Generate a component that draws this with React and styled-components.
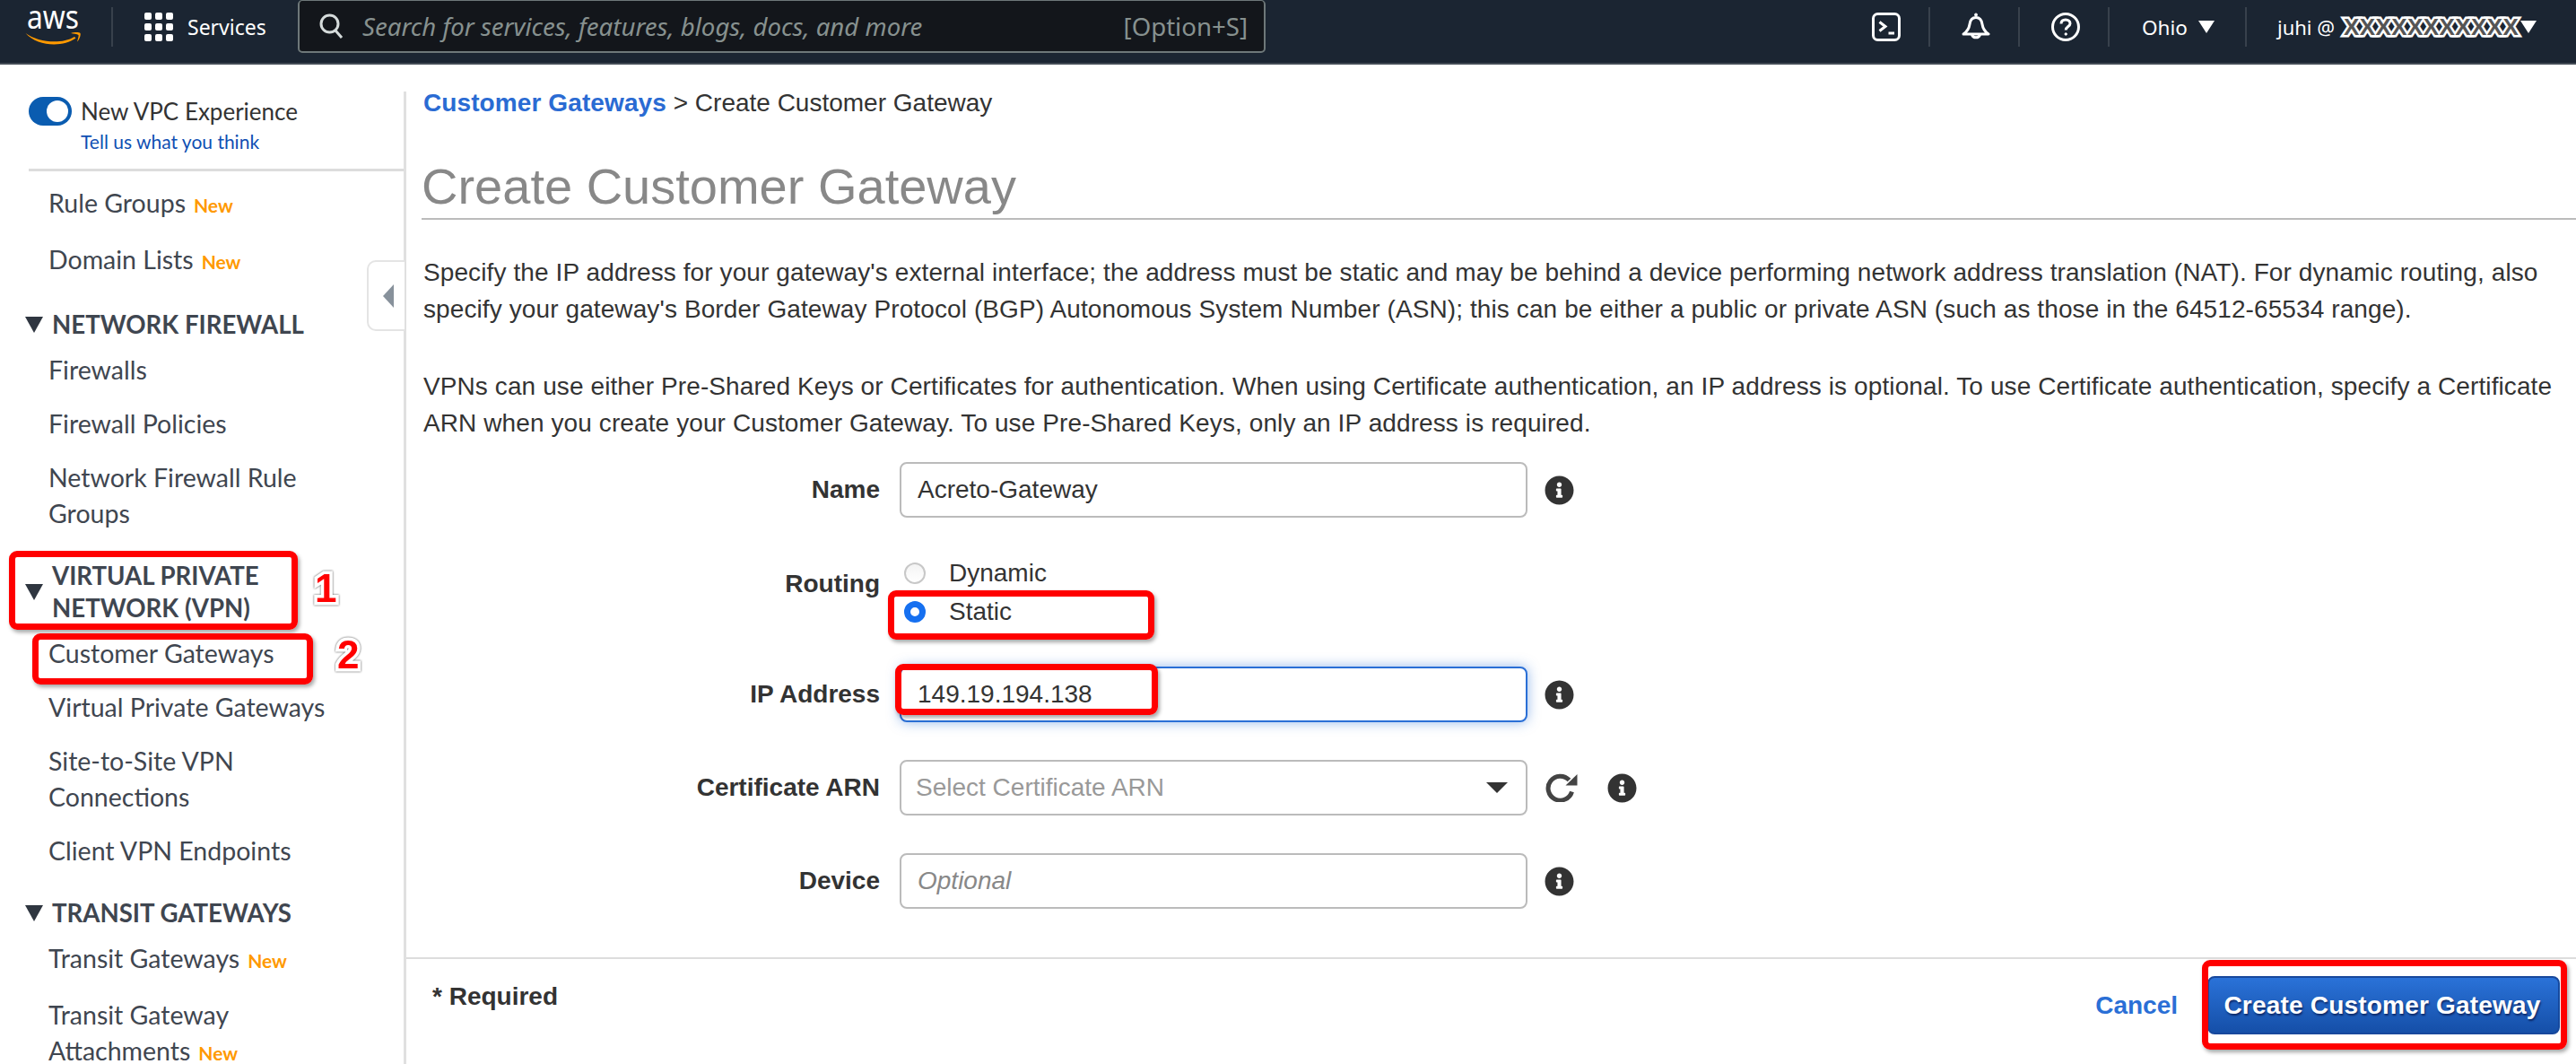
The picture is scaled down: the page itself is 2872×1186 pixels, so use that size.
import React from "react";
import styled, { createGlobalStyle } from "styled-components";
import { FaInfoCircle } from "react-icons/fa";

const GlobalStyle = createGlobalStyle`
    html, body {
        margin: 0;
        padding: 0;
        width: 2872px;
        height: 1186px;
        overflow: hidden;
        background: #fff;
    }
    * { box-sizing: border-box; }
`;

const UI_FONT = `Lato, "Noto Sans", sans-serif`;
const HEADER_FONT = `"Noto Sans", sans-serif`;
const FORM_FONT = `"Liberation Sans", Arial, sans-serif`;

const Page = styled.div`
    position: relative;
    width: 2872px;
    height: 1186px;
    display: flex;
    flex-direction: column;
    overflow: hidden;
    font-family: ${FORM_FONT};
    color: #333;
`;

/* top bar */
const Header = styled.header`
    flex: none;
    height: 72px;
    display: flex;
    align-items: flex-start;
    background: #1b2532;
    border-bottom: 2px solid #434b55;
    color: #fff;
    font-family: ${HEADER_FONT};
`;
const Logo = styled.svg`
    flex: none;
    width: 64px;
    height: 44px;
    margin: 10px 0 0 28px;
    overflow: visible;
`;
const HeaderDivider = styled.div`
    flex: none;
    width: 2px;
    height: 44px;
    margin: 8px 0 0 32px;
    background: #38414c;
`;
const GridIcon = styled.svg`
    flex: none;
    width: 32px;
    height: 32px;
    margin: 14px 0 0 35px;
`;
const ServicesLabel = styled.div`
    flex: none;
    width: 123px;
    margin-left: 16px;
    font-size: 23px;
    line-height: 60px;
`;
const SearchBox = styled.div`
    flex: none;
    width: 1079px;
    height: 59px;
    display: flex;
    align-items: center;
    padding: 0 18px 0 22px;
    background: #13161b;
    border: 2px solid #6e7879;
    border-top-width: 1px;
    border-radius: 5px;
    color: #87918f;
    font-size: 27.6px;
`;
const SearchGlyph = styled.svg`
    flex: none;
    width: 28px;
    height: 28px;
    margin-right: 20px;
`;
const SearchHint = styled.span`
    font-style: italic;
`;
const SearchKey = styled.span`
    margin-left: auto;
`;
const HeaderRight = styled.div`
    margin-left: auto;
    display: flex;
    align-items: flex-start;
    margin-top: 8px;
`;
const IconCell = styled.div`
    width: 100px;
    height: 44px;
    display: flex;
    align-items: center;
    justify-content: center;
    border-right: 2px solid #38414c;
    padding-left: 4px;
`;
const RegionCell = styled.div`
    width: 153px;
    height: 44px;
    display: flex;
    align-items: center;
    padding-left: 36px;
    border-right: 2px solid #38414c;
    font-size: 22.5px;
`;
const UserCell = styled.div`
    width: 367px;
    height: 44px;
    display: flex;
    align-items: center;
    padding-left: 34px;
    font-size: 22px;
`;
const Caret = styled.svg`
    flex: none;
    width: 18px;
    height: 14px;
    margin-left: ${(p) => p.$gap}px;
`;
const Redacted = styled.span`
    margin-left: 10px;
    font-family: ${FORM_FONT};
    font-weight: 700;
    font-size: 26px;
    letter-spacing: 0.4px;
    line-height: 1;
    color: #555;
    -webkit-text-stroke: 5px #fff;
    paint-order: stroke fill;
`;

/* below the top bar */
const Body = styled.div`
    flex: 1;
    min-height: 0;
    display: flex;
`;

/* left nav */
const Sidebar = styled.nav`
    position: relative;
    flex: none;
    width: 453px;
    margin-top: 30px;
    border-right: 3px solid #e0e0e0;
    font-family: ${UI_FONT};
    color: #3f4650;
`;
const ExperienceBox = styled.div`
    height: 89px;
    margin-left: 32px;
    padding-top: 6px;
    border-bottom: 3px solid #dcdcdc;
`;
const ExperienceRow = styled.div`
    display: flex;
    align-items: center;
    gap: 10px;
    font-size: 26px;
    color: #333;
    line-height: 30px;
`;
const Toggle = styled.div`
    flex: none;
    width: 48px;
    height: 32px;
    display: flex;
    align-items: center;
    justify-content: flex-end;
    padding-right: 4px;
    border-radius: 16px;
    background: #0a5cb0;
    &::after {
        content: "";
        width: 24px;
        height: 24px;
        border-radius: 50%;
        background: #fff;
    }
`;
const FeedbackLink = styled.div`
    margin: 4px 0 0 58px;
    font-size: 21px;
    line-height: 28px;
    color: #0f4fb3;
`;
const NavList = styled.div`
    padding-top: 15px;
`;
const NavItem = styled.div`
    width: 345px;
    margin: 0 0 20px 54px;
    font-size: 28.5px;
    line-height: 40px;
`;
const NewBadge = styled.span`
    margin-left: 9px;
    font-size: 21px;
    font-weight: 700;
    color: #f90;
`;
const NavHeading = styled.div`
    display: flex;
    align-items: center;
    margin: 32px 0 12px 28px;
    font-size: 27.6px;
    font-weight: 700;
    line-height: 36px;
    width: 320px;
`;
const HeadingCaret = styled.svg`
    flex: none;
    width: 20px;
    height: 18px;
    margin-right: 10px;
`;
const CollapseTab = styled.div`
    position: absolute;
    top: 188px;
    right: -1px;
    width: 42px;
    height: 79px;
    display: flex;
    align-items: center;
    justify-content: center;
    padding-left: 4px;
    background: #fff;
    border: 2px solid #e4e4e4;
    border-right: none;
    border-radius: 10px 0 0 10px;
`;

/* form panel */
const Main = styled.main`
    flex: 1;
    min-width: 0;
    display: flex;
    flex-direction: column;
`;
const Content = styled.div`
    padding: 28px 0 0 19px;
`;
const Breadcrumb = styled.div`
    font-size: 28px;
    line-height: 30px;
    white-space: pre;
`;
const CrumbLink = styled.span`
    font-weight: 700;
    letter-spacing: 0.1px;
    color: #2a6bd3;
`;
const Title = styled.h1`
    margin: 46px 0 0 -2px;
    padding-bottom: 3px;
    font-size: 56px;
    font-weight: 400;
    line-height: 64px;
    color: #888;
    border-bottom: 2px solid #bbb;
`;
const Paragraph = styled.p`
    margin: ${(p) => p.$top}px 20px 0 0;
    font-size: 28px;
    line-height: 41px;
    letter-spacing: 0.1px;
    color: #333;
`;
const Form = styled.div`
    margin-top: 23px;
    display: flex;
    flex-direction: column;
`;
const Row = styled.div`
    display: flex;
    align-items: ${(p) => (p.$top ? "flex-start" : "center")};
    margin-bottom: ${(p) => (p.$tight ? 40 : 42)}px;
`;
const Label = styled.label`
    flex: none;
    width: 509px;
    margin-right: 22px;
    margin-top: ${(p) => (p.$top ? 18 : 0)}px;
    text-align: right;
    font-size: 28px;
    font-weight: 700;
    line-height: 32px;
`;
const TextInput = styled.input`
    flex: none;
    width: 700px;
    height: 62px;
    padding: 0 18px;
    border: 2px solid ${(p) => (p.$focused ? "#2a6fd6" : "#bbb")};
    border-radius: 8px;
    outline: none;
    background: #fff;
    box-shadow: ${(p) => (p.$focused ? "0 0 14px rgba(42, 111, 214, 0.5)" : "none")};
    font-family: ${FORM_FONT};
    font-size: 28px;
    color: #333;
    &::placeholder {
        color: #888;
        font-style: italic;
        opacity: 1;
    }
`;
const SelectBox = styled.div`
    flex: none;
    width: 700px;
    height: 62px;
    display: flex;
    align-items: center;
    justify-content: space-between;
    padding: 0 20px 0 16px;
    border: 2px solid #bbb;
    border-radius: 8px;
    font-size: 28px;
    color: #999;
`;
const RadioGroup = styled.div`
    display: flex;
    flex-direction: column;
    padding-left: 5px;
`;
const RadioRow = styled.div`
    height: 43px;
    display: flex;
    align-items: center;
    gap: 26px;
    font-size: 28px;
`;
const Radio = styled.input`
    appearance: none;
    flex: none;
    width: 24px;
    height: 24px;
    margin: 0;
    border-radius: 50%;
    border: ${(p) => (p.checked ? "7px solid #1670f0" : "2px solid #c8c8c8")};
    background: ${(p) => (p.checked ? "#fff" : "linear-gradient(#f4f4f4, #fff)")};
`;
const Hint = styled.span`
    flex: none;
    display: flex;
    margin-left: ${(p) => p.$gap}px;
    font-size: 33px;
    color: #333;
`;
const RefreshIcon = styled.svg`
    flex: none;
    width: 36px;
    height: 32px;
    margin-left: 20px;
`;

/* bottom actions */
const Footer = styled.div`
    flex: 1;
    margin-top: 12px;
    display: flex;
    align-items: flex-start;
    padding: 19px 18px 0 29px;
    border-top: 2px solid #ddd;
`;
const Required = styled.div`
    margin-top: 7px;
    font-size: 28px;
    font-weight: 700;
    line-height: 32px;
`;
const CancelLink = styled.a`
    margin: 17px 33px 0 auto;
    font-size: 28px;
    font-weight: 700;
    line-height: 32px;
    color: #2a6fd6;
`;
const PrimaryButton = styled.button`
    width: 393px;
    height: 65px;
    padding: 0 3px 0 0;
    border: 2px solid #17489c;
    border-radius: 8px;
    background: linear-gradient(#2a72d8, #154fa8);
    color: #fff;
    font-family: ${FORM_FONT};
    font-size: 28px;
    font-weight: 700;
    letter-spacing: 0.2px;
    text-shadow: 1px 2px 2px rgba(0, 0, 40, 0.55);
`;

/* red annotations drawn over the shot */
const Callout = styled.div`
    position: absolute;
    left: ${(p) => p.$x}px;
    top: ${(p) => p.$y}px;
    width: ${(p) => p.$w}px;
    height: ${(p) => p.$h}px;
    border: 7px solid #f00;
    border-radius: 9px;
    box-shadow: 2px 3px 4px rgba(0, 0, 0, 0.35);
    pointer-events: none;
`;
const StepNumber = styled.div`
    position: absolute;
    left: ${(p) => p.$x}px;
    top: ${(p) => p.$y}px;
    font-family: ${FORM_FONT};
    font-weight: 700;
    font-size: 44px;
    line-height: 44px;
    color: #f00;
    -webkit-text-stroke: 7px #fff;
    paint-order: stroke fill;
    filter: drop-shadow(0 0 1.2px rgba(0, 0, 0, 0.7));
`;

function AwsLogo() {
    return (
        <Logo viewBox="0 0 64 44">
            <text x="2" y="22" fill="#fff" fontFamily="'Noto Sans', sans-serif" fontSize="36" textLength="58" lengthAdjust="spacingAndGlyphs">aws</text>
            <path fill="#f90" d="M0.5 27 C14 37 40 40 55 31 L56.5 32.5 C42 43 14 42 0.5 27 Z" />
            <path fill="#f90" d="M51 27 C54 26 60 25.5 61.5 27 C62.5 29 60 35 58 36.5 C59 33 60 30 59.5 29 C58 28 54 27.5 51 27 Z" />
        </Logo>
    );
}

function ServicesGrid() {
    const cells = [0, 12, 24];
    return (
        <GridIcon viewBox="0 0 32 32">
            {cells.map((y) =>
                cells.map((x) => <rect key={`${x}-${y}`} x={x} y={y} width="8" height="8" rx="2" fill="#fff" />)
            )}
        </GridIcon>
    );
}

function TerminalIcon() {
    return (
        <svg width="32" height="32" viewBox="0 0 32 32" fill="none" stroke="#fff" strokeWidth="3">
            <rect x="1.5" y="1.5" width="29" height="29" rx="5" />
            <path d="M8.5 10.5 L15 15.5 L8.5 20.5" />
            <path d="M18.5 23 H25" />
        </svg>
    );
}

function BellIcon() {
    return (
        <svg width="32" height="32" viewBox="0 0 32 32" fill="none" stroke="#fff" strokeWidth="3">
            <path d="M2 24 Q8 20 9 13 Q10 5.5 16 5.5 Q22 5.5 23 13 Q24 20 30 24 Z" strokeLinejoin="round" />
            <circle cx="16" cy="2.5" r="1.5" fill="#fff" strokeWidth="1" />
            <path d="M11.5 24.5 A4.7 4.7 0 0 0 20.5 24.5" />
        </svg>
    );
}

function HelpIcon() {
    return (
        <svg width="32" height="32" viewBox="0 0 32 32" fill="none" stroke="#fff" strokeWidth="3">
            <circle cx="16" cy="16" r="14.5" />
            <path d="M11 12.5 C11 9.5 13.2 8 16 8 C18.8 8 21 9.7 21 12.2 C21 15.5 16.2 15.5 16.2 19.5" />
            <circle cx="16.2" cy="24" r="1.2" fill="#fff" strokeWidth="1" />
        </svg>
    );
}

function DownCaret({ gap }) {
    return (
        <Caret $gap={gap} viewBox="0 0 18 14">
            <path d="M0 0 H18 L9 14 Z" fill="#fff" />
        </Caret>
    );
}

function SectionCaret() {
    return (
        <HeadingCaret viewBox="0 0 20 18">
            <path d="M0 0 H20 L10 18 Z" fill="#2f3640" />
        </HeadingCaret>
    );
}

function InfoHint({ gap = 19 }) {
    return (
        <Hint $gap={gap}>
            <FaInfoCircle />
        </Hint>
    );
}

export default function App() {
    return (
        <Page>
            <GlobalStyle />
            <Header>
                <AwsLogo />
                <HeaderDivider />
                <ServicesGrid />
                <ServicesLabel>Services</ServicesLabel>
                <SearchBox>
                    <SearchGlyph viewBox="0 0 28 28" fill="none" stroke="#d5dbdb" strokeWidth="3">
                        <circle cx="11.5" cy="11.5" r="9.5" />
                        <path d="M18 19 L25 27" />
                    </SearchGlyph>
                    <SearchHint>Search for services, features, blogs, docs, and more</SearchHint>
                    <SearchKey>[Option+S]</SearchKey>
                </SearchBox>
                <HeaderRight>
                    <IconCell><TerminalIcon /></IconCell>
                    <IconCell><BellIcon /></IconCell>
                    <IconCell><HelpIcon /></IconCell>
                    <RegionCell>Ohio<DownCaret gap={12} /></RegionCell>
                    <UserCell>juhi @ <Redacted>XXXXXXXXXXX</Redacted><DownCaret gap={2} /></UserCell>
                </HeaderRight>
            </Header>
            <Body>
                <Sidebar>
                    <ExperienceBox>
                        <ExperienceRow><Toggle />New VPC Experience</ExperienceRow>
                        <FeedbackLink>Tell us what you think</FeedbackLink>
                    </ExperienceBox>
                    <CollapseTab>
                        <svg width="12" height="26" viewBox="0 0 12 26">
                            <path d="M12 0 V26 L0 13 Z" fill="#87919b" />
                        </svg>
                    </CollapseTab>
                    <NavList>
                        <NavItem>Rule Groups<NewBadge>New</NewBadge></NavItem>
                        <NavItem>Domain Lists<NewBadge>New</NewBadge></NavItem>
                        <NavHeading><SectionCaret />NETWORK FIREWALL</NavHeading>
                        <NavItem>Firewalls</NavItem>
                        <NavItem>Firewall Policies</NavItem>
                        <NavItem>Network Firewall Rule Groups</NavItem>
                        <NavHeading><SectionCaret />VIRTUAL PRIVATE NETWORK (VPN)</NavHeading>
                        <NavItem>Customer Gateways</NavItem>
                        <NavItem>Virtual Private Gateways</NavItem>
                        <NavItem>Site-to-Site VPN Connections</NavItem>
                        <NavItem>Client VPN Endpoints</NavItem>
                        <NavHeading><SectionCaret />TRANSIT GATEWAYS</NavHeading>
                        <NavItem>Transit Gateways<NewBadge>New</NewBadge></NavItem>
                        <NavItem>Transit Gateway Attachments<NewBadge>New</NewBadge></NavItem>
                    </NavList>
                </Sidebar>
                <Main>
                    <Content>
                        <Breadcrumb><CrumbLink>Customer Gateways</CrumbLink> &gt; Create Customer Gateway</Breadcrumb>
                        <Title>Create Customer Gateway</Title>
                        <Paragraph $top={38}>
                            Specify the IP address for your gateway's external interface; the address must be static and may be behind a device performing network address translation (NAT). For dynamic routing, also specify your gateway's Border Gateway Protocol (BGP) Autonomous System Number (ASN); this can be either a public or private ASN (such as those in the 64512-65534 range).
                        </Paragraph>
                        <Paragraph $top={45}>
                            VPNs can use either Pre-Shared Keys or Certificates for authentication. When using Certificate authentication, an IP address is optional. To use Certificate authentication, specify a Certificate ARN when you create your Customer Gateway. To use Pre-Shared Keys, only an IP address is required.
                        </Paragraph>
                        <Form>
                            <Row $tight>
                                <Label>Name</Label>
                                <TextInput readOnly value="Acreto-Gateway" />
                                <InfoHint />
                            </Row>
                            <Row $tight $top>
                                <Label $top>Routing</Label>
                                <RadioGroup>
                                    <RadioRow><Radio type="radio" readOnly checked={false} />Dynamic</RadioRow>
                                    <RadioRow><Radio type="radio" readOnly checked />Static</RadioRow>
                                </RadioGroup>
                            </Row>
                            <Row>
                                <Label>IP Address</Label>
                                <TextInput $focused readOnly value="149.19.194.138" />
                                <InfoHint />
                            </Row>
                            <Row>
                                <Label>Certificate ARN</Label>
                                <SelectBox>
                                    Select Certificate ARN
                                    <svg width="24" height="12" viewBox="0 0 24 12">
                                        <path d="M0 0 H24 L12 12 Z" fill="#333" />
                                    </svg>
                                </SelectBox>
                                <RefreshIcon viewBox="0 0 36 32">
                                    <path d="M29.5 20.5 A13.5 13.5 0 1 1 26.5 7.5" fill="none" stroke="#444" strokeWidth="5" />
                                    <path d="M22.5 13.5 H35.5 V1 Z" fill="#444" />
                                </RefreshIcon>
                                <InfoHint gap={33} />
                            </Row>
                            <Row>
                                <Label>Device</Label>
                                <TextInput readOnly placeholder="Optional" />
                                <InfoHint />
                            </Row>
                        </Form>
                    </Content>
                    <Footer>
                        <Required>* Required</Required>
                        <CancelLink>Cancel</CancelLink>
                        <PrimaryButton>Create Customer Gateway</PrimaryButton>
                    </Footer>
                </Main>
            </Body>
            <Callout $x={10} $y={614} $w={322} $h={88} />
            <Callout $x={36} $y={706} $w={313} $h={57} />
            <Callout $x={990} $y={658} $w={297} $h={55} />
            <Callout $x={998} $y={740} $w={293} $h={57} />
            <Callout $x={2455} $y={1070} $w={407} $h={100} />
            <StepNumber $x={351} $y={634}>1</StepNumber>
            <StepNumber $x={376} $y={708}>2</StepNumber>
        </Page>
    );
}
